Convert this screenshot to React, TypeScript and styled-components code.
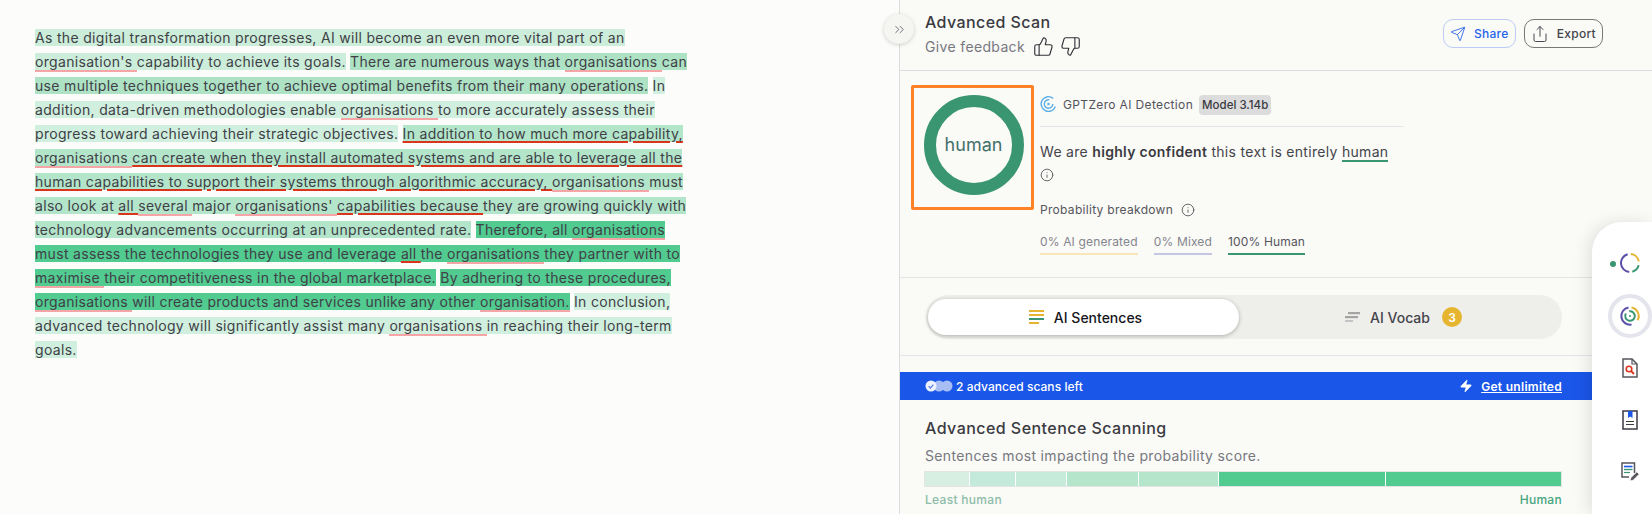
import React from 'react';
import styled, { createGlobalStyle } from 'styled-components';
import { ChevronsRight, Info, Send, Share, ThumbsDown, ThumbsUp, Zap } from 'lucide-react';

const GlobalStyle = createGlobalStyle`
  html, body {
    margin: 0;
    padding: 0;
    width: 1652px;
    height: 514px;
    overflow: hidden;
    background: #fcfcfa;
    font-family: Inter, 'Liberation Sans', sans-serif;
    color: #3f3f46;
  }
`;

const Page = styled.div`
  display: flex;
  width: 1652px;
  height: 514px;
  overflow: hidden;
`;

const Editor = styled.div`
  width: 899px;
  flex: none;
  padding: 26px 0 0 35px;
  box-sizing: border-box;
`;

const Essay = styled.p`
  margin: 0;
  width: 655px;
  font-size: 14px;
  line-height: 24px;
  letter-spacing: 0.32px;
  color: #3f3f46;
`;

const Sentence = styled.span<{ $bg: string }>`
  background: ${(p) => p.$bg};
`;

const Soft = styled.span`
  border-bottom: 2px solid #f5a5a5;
`;

const Hard = styled.span`
  text-decoration: underline 2px #d9341e;
  text-underline-offset: 2px;
`;

const Panel = styled.div`
  position: relative;
  flex: 1;
  min-width: 0;
  background: #fafaf6;
  border-left: 1px solid #dcdce0;
`;

const CollapseButton = styled.div`
  position: absolute;
  left: -16px;
  top: 14px;
  width: 30px;
  height: 30px;
  border-radius: 50%;
  background: #f5f5f2;
  box-shadow: 0 1px 4px rgba(0, 0, 0, 0.18);
  display: flex;
  align-items: center;
  justify-content: center;
  color: #6b6b78;
`;

const Header = styled.div`
  height: 71px;
  box-sizing: border-box;
  border-bottom: 1px solid #dedee2;
  padding: 13px 49px 0 25px;
  display: flex;
  justify-content: space-between;
`;

const PageTitle = styled.div`
  font-size: 16px;
  line-height: 18px;
  font-weight: 500;
  letter-spacing: 0.4px;
  color: #3a3a42;
`;

const Feedback = styled.div`
  margin-top: 5px;
  display: flex;
  align-items: center;
  gap: 8px;
  font-size: 14px;
  letter-spacing: 0.35px;
  color: #777780;
`;

const Thumbs = styled.span`
  display: flex;
  gap: 6px;
  color: #33333a;
`;

const Actions = styled.div`
  display: flex;
  gap: 8px;
  padding-top: 6px;
`;

const ActionButton = styled.div<{ $color: string; $border: string }>`
  height: 29px;
  box-sizing: border-box;
  display: flex;
  align-items: center;
  gap: 8px;
  padding: 0 6px;
  font-size: 12px;
  font-weight: 500;
  letter-spacing: 0.3px;
  border: 1px solid ${(p) => p.$border};
  border-radius: 10px;
  color: ${(p) => p.$color};
`;

const Summary = styled.div`
  height: 207px;
  box-sizing: border-box;
  border-bottom: 1px solid #e4e4ea;
  padding: 14px 0 0 11px;
  display: flex;
  gap: 6px;
`;

const ScoreBox = styled.div`
  width: 123px;
  height: 125px;
  box-sizing: border-box;
  border: 3.5px solid #fd8127;
  border-radius: 2px;
  padding: 6.5px 0 0 2px;
  display: flex;
  align-items: flex-start;
  justify-content: center;
`;

const ScoreRing = styled.div`
  width: 100px;
  height: 100px;
  box-sizing: border-box;
  border: 12px solid #3a9670;
  border-radius: 50%;
  display: flex;
  align-items: center;
  justify-content: center;
  font-size: 18px;
  color: #44706c;
`;

const Details = styled.div`
  width: 364px;
`;

const ModelRow = styled.div`
  height: 31px;
  padding-top: 10px;
  border-bottom: 1px solid #e4e4ea;
  display: flex;
  align-items: flex-start;
  gap: 6px;
  font-size: 12px;
  line-height: 20px;
  letter-spacing: 0.35px;
  color: #52525b;
`;

const ModelBadge = styled.span`
  height: 20px;
  padding: 0 3px;
  border-radius: 4px;
  background: #dcdcdc;
  font-size: 11.5px;
  font-weight: 500;
  letter-spacing: 0;
  color: #3a3a42;
`;

const Verdict = styled.div`
  margin-top: 15px;
  font-size: 14px;
  line-height: 20px;
  letter-spacing: 0.3px;
  color: #44444c;
`;

const Strong = styled.b`
  font-weight: 600;
  color: #3a3a42;
`;

const HumanWord = styled.span`
  border-bottom: 2px solid #3a9670;
`;

const InfoLine = styled.div`
  margin-top: 2px;
  height: 22px;
  display: flex;
  align-items: center;
  color: #55555c;
`;

const BreakdownTitle = styled.div`
  margin-top: 16px;
  display: flex;
  align-items: center;
  gap: 8px;
  font-size: 12px;
  letter-spacing: 0.3px;
  color: #55555c;
`;

const Stats = styled.div`
  margin-top: 15px;
  display: flex;
  gap: 16px;
`;

const Stat = styled.span<{ $line: string; $color: string }>`
  font-size: 12px;
  line-height: 20px;
  padding-bottom: 1px;
  letter-spacing: 0.15px;
  border-bottom: 2px solid ${(p) => p.$line};
  color: ${(p) => p.$color};
`;

const TabsArea = styled.div`
  height: 78px;
  box-sizing: border-box;
  border-bottom: 1px solid #e4e4ea;
  padding: 17px 0 0 26px;
`;

const Tabs = styled.div`
  width: 636px;
  height: 44px;
  box-sizing: border-box;
  padding: 4px 2px;
  border-radius: 22px;
  background: #eeeeea;
  display: flex;
`;

const ActiveTab = styled.div`
  flex: 0 0 311px;
  box-sizing: border-box;
  padding-left: 4px;
  display: flex;
  align-items: center;
  justify-content: center;
  gap: 10px;
  font-size: 14px;
  font-weight: 500;
  border-radius: 18px;
  color: #16161c;
  background: #ffffff;
  box-shadow: 0 1px 4px rgba(0, 0, 0, 0.28);
`;

const IdleTab = styled.div`
  flex: 1;
  padding-left: 8px;
  display: flex;
  align-items: center;
  justify-content: center;
  gap: 10px;
  font-size: 14px;
  font-weight: 500;
  color: #44444c;
`;

const CountBadge = styled.span`
  width: 20px;
  height: 20px;
  margin-left: 2px;
  border-radius: 50%;
  background: #e6b530;
  color: #ffffff;
  font-size: 12px;
  font-weight: 600;
  display: flex;
  align-items: center;
  justify-content: center;
`;

const ScansBar = styled.div`
  margin-top: 16px;
  height: 28px;
  padding: 0 90px 0 25px;
  background: #1a56e8;
  color: #ffffff;
  display: flex;
  align-items: center;
  justify-content: space-between;
  font-size: 12px;
  font-weight: 500;
  letter-spacing: 0.05px;
`;

const ScansLeft = styled.span`
  display: flex;
  align-items: center;
  gap: 3px;
`;

const Unlimited = styled.span`
  display: flex;
  align-items: center;
  gap: 8px;
`;

const UnlimitedLink = styled.span`
  text-decoration: underline;
  font-weight: 600;
  letter-spacing: 0.3px;
`;

const Scanning = styled.div`
  padding: 18px 90px 0 24px;
`;

const ScanningTitle = styled.div`
  margin-left: 1px;
  font-size: 16px;
  line-height: 20px;
  font-weight: 500;
  letter-spacing: 0.45px;
  color: #3a3a42;
`;

const ScanningSub = styled.div`
  margin: 8px 0 0 1px;
  font-size: 14px;
  line-height: 20px;
  letter-spacing: 0.35px;
  color: #777780;
`;

const Meter = styled.div`
  margin-top: 5px;
  height: 16px;
  box-sizing: border-box;
  border: 1px solid #e4e4e4;
  display: flex;
  gap: 1px;
  background: #ffffff;
`;

const MeterCell = styled.div<{ $w: number; $bg: string }>`
  width: ${(p) => p.$w}px;
  flex: none;
  background: ${(p) => p.$bg};
`;

const MeterLabels = styled.div`
  margin-top: 5px;
  display: flex;
  justify-content: space-between;
  font-size: 12px;
  font-weight: 500;
  letter-spacing: 0.3px;
`;

const LeastLabel = styled.span`
  color: #8dbda9;
  padding-left: 1px;
`;

const HumanLabel = styled.span`
  color: #45a57f;
`;

const SideRail = styled.div`
  position: absolute;
  top: 222px;
  right: 0;
  bottom: 0;
  width: 60px;
  background: #ffffff;
  border-top-left-radius: 30px;
  box-shadow: -4px 0 16px rgba(0, 0, 0, 0.1);
  display: flex;
  flex-direction: column;
  align-items: center;
  padding: 30px 0 0 16px;
  box-sizing: border-box;
`;

const RailLogo = styled.div`
  height: 42px;
  margin-left: -4px;
  display: flex;
  align-items: flex-start;
`;

const RailActive = styled.div`
  width: 44px;
  height: 44px;
  flex: none;
  box-sizing: border-box;
  border: 4px solid #e4e4ec;
  border-radius: 50%;
  display: flex;
  align-items: center;
  justify-content: center;
`;

const RailItem = styled.div`
  margin-top: 8px;
  height: 44px;
  flex: none;
  display: flex;
  align-items: center;
  justify-content: center;
`;

const polar = (c: number, r: number, deg: number) => {
  const a = ((deg - 90) * Math.PI) / 180;
  return `${(c + r * Math.cos(a)).toFixed(2)} ${(c + r * Math.sin(a)).toFixed(2)}`;
};

const arc = (c: number, r: number, from: number, to: number) =>
  `M${polar(c, r, from)} A${r} ${r} 0 ${to - from > 180 ? 1 : 0} 1 ${polar(c, r, to)}`;

function GptzeroLogo() {
  return (
    <svg width="17" height="18" viewBox="0 0 20 20" fill="none" stroke="#5aaee8" strokeWidth="1.6">
      <path d={arc(10, 8.6, 110, 400)} />
      <path d={arc(10, 5, 90, 370)} />
      <circle cx="10" cy="10" r="1.5" fill="#5aaee8" stroke="none" />
    </svg>
  );
}

function LogoRing() {
  return (
    <svg width="40" height="22" viewBox="0 0 40 22" fill="none" strokeWidth="2">
      <circle cx="5" cy="12" r="3" fill="#3a9670" />
      <g transform="translate(13 2)">
        <path d={arc(9, 9, 185, 345)} stroke="#5a50a8" />
        <path d={arc(9, 9, 5, 80)} stroke="#e6b530" />
        <path d={arc(9, 9, 105, 165)} stroke="#3a9670" />
      </g>
    </svg>
  );
}

function ScanRing() {
  return (
    <svg width="22" height="22" viewBox="0 0 22 22" fill="none" strokeWidth="2">
      <path d={arc(11, 8.7, 170, 350)} stroke="#5a50a8" />
      <path d={arc(11, 8.7, 10, 120)} stroke="#e6b530" />
      <path d={arc(11, 4.8, 350, 660)} stroke="#3a9670" />
      <circle cx="11" cy="11" r="1" fill="#3a9670" />
    </svg>
  );
}

function SentenceLines() {
  return (
    <svg width="15" height="16" viewBox="0 0 15 16">
      <rect y="1" width="15" height="2" fill="#e6b530" />
      <rect y="5" width="15" height="2" fill="#e6b530" />
      <rect y="9" width="15" height="2" fill="#3a9670" />
      <rect y="13" width="10" height="2" fill="#e6b530" />
    </svg>
  );
}

function VocabLines() {
  return (
    <svg width="15" height="10" viewBox="0 0 15 10">
      <rect x="3" y="0" width="12" height="2.2" fill="#a4a4a4" />
      <rect y="4" width="13" height="2.2" fill="#a4a4a4" />
      <rect y="8" width="8" height="2" fill="#c4c4c4" />
    </svg>
  );
}

function ScanDots() {
  return (
    <svg width="28" height="12" viewBox="0 0 28 12">
      <circle cx="22" cy="6" r="5.5" fill="#a9bdf5" />
      <circle cx="14" cy="6" r="5.5" fill="#a9bdf5" />
      <circle cx="6" cy="6" r="5.5" fill="#eef2ff" />
      <path d="M3.6 6.2 5.4 8l3-3.4" fill="none" stroke="#5a7fe8" strokeWidth="1.2" />
    </svg>
  );
}

function DocSearch() {
  return (
    <svg width="16" height="20" viewBox="0 0 16 20" fill="none">
      <path d="M1 1h9l5 5v13H1z" fill="#fff" stroke="#55555c" strokeWidth="1.5" />
      <path d="M10 1v5h5" stroke="#55555c" strokeWidth="1.2" />
      <circle cx="7" cy="11" r="2.8" stroke="#d9341e" strokeWidth="1.6" />
      <path d="m9 13 3 3" stroke="#d9341e" strokeWidth="1.8" />
    </svg>
  );
}

function DocBookmark() {
  return (
    <svg width="16" height="20" viewBox="0 0 16 20" fill="none">
      <rect x="1" y="1" width="14" height="18" fill="#fff" stroke="#3a3a42" strokeWidth="1.5" />
      <path d="M6 1h4.5v7L8.2 6.4 6 8z" fill="#1a56e8" />
      <path d="M4 11.5h8M4 14.5h8" stroke="#3a3a42" strokeWidth="1.2" />
    </svg>
  );
}

function DocEdit() {
  return (
    <svg width="19" height="20" viewBox="0 0 19 20" fill="none">
      <path d="M13.5 11V1H1v14h7" fill="#fff" stroke="#55555c" strokeWidth="1.5" />
      <path d="M3 4.5h8.5" stroke="#1a56e8" strokeWidth="1.6" />
      <path d="M3 7.5h8.5" stroke="#3a9670" strokeWidth="1.4" />
      <path d="M3 10.5h6" stroke="#3a9670" strokeWidth="1.2" />
      <path d="m9 19 .8-3.2 6-6 2.4 2.4-6 6z" fill="#55555c" stroke="#fff" strokeWidth=".8" />
    </svg>
  );
}

const meterCells = [
  { w: 44, bg: '#d7efe2' },
  { w: 45, bg: '#c3eadb' },
  { w: 50, bg: '#c6ebda' },
  { w: 71, bg: '#b5e6cc' },
  { w: 79, bg: '#b5e6cc' },
  { w: 166, bg: '#52cb91' },
  { w: 175, bg: '#52cb91' },
];

function App() {
  return (
    <Page>
      <GlobalStyle />
      <Editor>
        <Essay>
          <Sentence $bg="#ccedda">
            As the digital transformation progresses, AI will become an even more vital part of an{' '}
            <Soft>organisation's </Soft>capability to achieve its goals.
          </Sentence>{' '}
          <Sentence $bg="#ade2c5">
            There are numerous ways that <Soft>organisations </Soft>can use multiple techniques together to achieve
            optimal benefits from their many operations.
          </Sentence>{' '}
          <Sentence $bg="#d1efdf">
            In addition, data-driven methodologies enable <Soft>organisations </Soft>to more accurately assess their
            progress toward achieving their strategic objectives.
          </Sentence>{' '}
          <Sentence $bg="#b3e5cb">
            <Hard>In addition to how much more capability, </Hard>
            <Soft>organisations </Soft>
            <Hard>can create when they install automated systems and are able to leverage all the human capabilities to support their systems through algorithmic accuracy, </Hard>
            <Soft>organisations </Soft>must also look at <Hard>all </Hard>
            <Soft>several </Soft>major <Soft>organisations' </Soft>
            <Hard>capabilities because </Hard>they are growing quickly with technology advancements occurring at an
            unprecedented rate.
          </Sentence>{' '}
          <Sentence $bg="#52cb91">
            Therefore, all <Soft>organisations </Soft>must assess the technologies they use and leverage <Hard>all </Hard>
            the <Soft>organisations </Soft>they partner with to <Soft>maximise </Soft>their competitiveness in the global
            marketplace.
          </Sentence>{' '}
          <Sentence $bg="#52cb91">
            By adhering to these procedures, <Soft>organisations </Soft>will create products and services unlike any other{' '}
            <Soft>organisation.</Soft>
          </Sentence>{' '}
          <Sentence $bg="#d1efdf">
            In conclusion, advanced technology will significantly assist many <Soft>organisations </Soft>in reaching their
            long-term goals.
          </Sentence>
        </Essay>
      </Editor>

      <Panel>
        <CollapseButton>
          <ChevronsRight size={15} strokeWidth={1.5} />
        </CollapseButton>

        <Header>
          <div>
            <PageTitle>Advanced Scan</PageTitle>
            <Feedback>
              Give feedback
              <Thumbs>
                <ThumbsUp size={21} strokeWidth={1.3} />
                <ThumbsDown size={21} strokeWidth={1.3} />
              </Thumbs>
            </Feedback>
          </div>
          <Actions>
            <ActionButton $color="#2563eb" $border="#bccbf6">
              <Send size={16} strokeWidth={1.3} />
              Share
            </ActionButton>
            <ActionButton $color="#44444c" $border="#777777">
              <Share size={18} strokeWidth={1.3} />
              Export
            </ActionButton>
          </Actions>
        </Header>

        <Summary>
          <ScoreBox>
            <ScoreRing>human</ScoreRing>
          </ScoreBox>
          <Details>
            <ModelRow>
              <GptzeroLogo />
              GPTZero AI Detection
              <ModelBadge>Model 3.14b</ModelBadge>
            </ModelRow>
            <Verdict>
              We are <Strong>highly confident</Strong> this text is entirely <HumanWord>human</HumanWord>
            </Verdict>
            <InfoLine>
              <Info size={14} strokeWidth={1.5} />
            </InfoLine>
            <BreakdownTitle>
              Probability breakdown
              <Info size={14} strokeWidth={1.5} />
            </BreakdownTitle>
            <Stats>
              <Stat $line="#f9e6b8" $color="#85858e">0% AI generated</Stat>
              <Stat $line="#c5c5e4" $color="#85858e">0% Mixed</Stat>
              <Stat $line="#3a9670" $color="#55555c">100% Human</Stat>
            </Stats>
          </Details>
        </Summary>

        <TabsArea>
          <Tabs>
            <ActiveTab>
              <SentenceLines />
              AI Sentences
            </ActiveTab>
            <IdleTab>
              <VocabLines />
              AI Vocab
              <CountBadge>3</CountBadge>
            </IdleTab>
          </Tabs>
        </TabsArea>

        <ScansBar>
          <ScansLeft>
            <ScanDots />
            2 advanced scans left
          </ScansLeft>
          <Unlimited>
            <Zap size={14} fill="#ffffff" strokeWidth={1} />
            <UnlimitedLink>Get unlimited</UnlimitedLink>
          </Unlimited>
        </ScansBar>

        <Scanning>
          <ScanningTitle>Advanced Sentence Scanning</ScanningTitle>
          <ScanningSub>Sentences most impacting the probability score.</ScanningSub>
          <Meter>
            {meterCells.map((cell, i) => (
              <MeterCell key={i} $w={cell.w} $bg={cell.bg} />
            ))}
          </Meter>
          <MeterLabels>
            <LeastLabel>Least human</LeastLabel>
            <HumanLabel>Human</HumanLabel>
          </MeterLabels>
        </Scanning>

        <SideRail>
          <RailLogo>
            <LogoRing />
          </RailLogo>
          <RailActive>
            <ScanRing />
          </RailActive>
          <RailItem>
            <DocSearch />
          </RailItem>
          <RailItem>
            <DocBookmark />
          </RailItem>
          <RailItem>
            <DocEdit />
          </RailItem>
        </SideRail>
      </Panel>
    </Page>
  );
}

export default App;
